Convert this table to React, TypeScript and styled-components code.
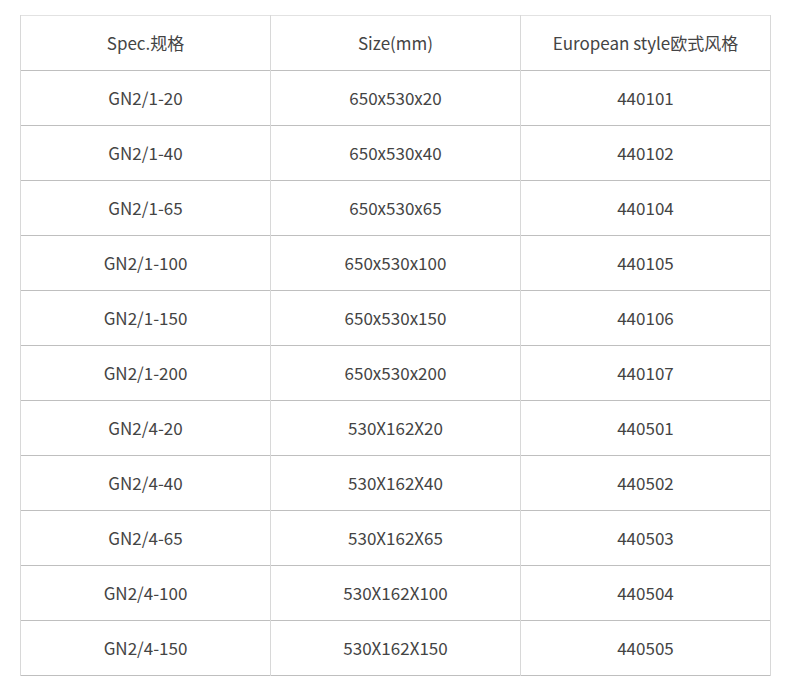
import styled, { createGlobalStyle } from "styled-components";
import React from "react";

const GlobalStyle = createGlobalStyle`
    body {
        margin: 0;
        background: #ffffff;
        font-family: "Noto Sans CJK SC", "Noto Sans", sans-serif;
    }
`;

const rows: Array<[string, string, string]> = [
    ["GN2/1-20", "650x530x20", "440101"],
    ["GN2/1-40", "650x530x40", "440102"],
    ["GN2/1-65", "650x530x65", "440104"],
    ["GN2/1-100", "650x530x100", "440105"],
    ["GN2/1-150", "650x530x150", "440106"],
    ["GN2/1-200", "650x530x200", "440107"],
    ["GN2/4-20", "530X162X20", "440501"],
    ["GN2/4-40", "530X162X40", "440502"],
    ["GN2/4-65", "530X162X65", "440503"],
    ["GN2/4-100", "530X162X100", "440504"],
    ["GN2/4-150", "530X162X150", "440505"],
];

export default function App() {
    return (
        <Page>
            <GlobalStyle />
            <Table>
                <thead>
                    <Row>
                        <Cell as="th">Spec.规格</Cell>
                        <Cell as="th">Size(mm)</Cell>
                        <Cell as="th">European style欧式风格</Cell>
                    </Row>
                </thead>
                <tbody>
                    {rows.map((r, key) => (
                        <Row key={key}>
                            {r.map((v, i) => <Cell key={i}>{v}</Cell>)}
                        </Row>
                    ))}
                </tbody>
            </Table>
        </Page>
    );
}

const Page = styled.div`
    padding: 15px 20px 22px 20px;
`;

const Table = styled.table`
    border-collapse: collapse;
    table-layout: fixed;
    width: 751px;
    border-top: 1px solid #e2e2e2;
`;

const Row = styled.tr`
    height: 55px;
    border-bottom: 1px solid #bfbfbf;
`;

const Cell = styled.td`
    width: 249px;
    padding: 0 0 2px 0;
    text-align: center;
    vertical-align: middle;
    font-size: 17px;
    font-weight: 400;
    color: #444444;
    border-left: 1px solid #d8d8d8;
    border-right: 1px solid #d8d8d8;
`;
